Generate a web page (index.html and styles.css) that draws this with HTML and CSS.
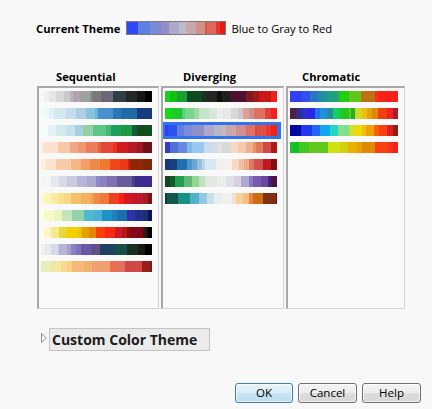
FILE: index.html
```html
<!DOCTYPE html>
<html>
<head>
<meta charset="utf-8">
<title>Color Theme</title>
<link rel="stylesheet" href="styles.css">
</head>
<body>
<div class="dialog">
  <div class="current">
    <span class="label strong">Current Theme</span>
    <span class="theme-bar"></span>
    <span class="label">Blue to Gray to Red</span>
  </div>

  <div class="lists">
    <div class="col col-seq">
      <div class="col-title">Sequential</div>
      <div class="list">
        <div class="item"><div class="sw s1"></div></div>
        <div class="item"><div class="sw s2"></div></div>
        <div class="item"><div class="sw s3"></div></div>
        <div class="item"><div class="sw s4"></div></div>
        <div class="item"><div class="sw s5"></div></div>
        <div class="item"><div class="sw s6"></div></div>
        <div class="item"><div class="sw s7"></div></div>
        <div class="item"><div class="sw s8"></div></div>
        <div class="item"><div class="sw s9"></div></div>
        <div class="item"><div class="sw s10"></div></div>
        <div class="item"><div class="sw s11"></div></div>
      </div>
    </div>
    <div class="col col-div">
      <div class="col-title">Diverging</div>
      <div class="list">
        <div class="item"><div class="sw d1"></div></div>
        <div class="item"><div class="sw d2"></div></div>
        <div class="item sel"><div class="sw d3"></div></div>
        <div class="item"><div class="sw d4"></div></div>
        <div class="item"><div class="sw d5"></div></div>
        <div class="item"><div class="sw d6"></div></div>
        <div class="item"><div class="sw d7"></div></div>
      </div>
    </div>
    <div class="col col-chr">
      <div class="col-title">Chromatic</div>
      <div class="list">
        <div class="item"><div class="sw c1"></div></div>
        <div class="item"><div class="sw c2"></div></div>
        <div class="item"><div class="sw c3"></div></div>
        <div class="item"><div class="sw c4"></div></div>
      </div>
    </div>
  </div>

  <div class="custom">
    <svg class="disclosure" width="6" height="10" viewBox="0 0 6 10"><polygon points="0.5,0.5 5.3,5 0.5,9.5" fill="#ffffff" stroke="#8c8c8c" stroke-width="1"/></svg>
    <div class="custom-box">Custom Color Theme</div>
  </div>

  <div class="buttons">
    <button class="btn btn-default">OK</button>
    <button class="btn">Cancel</button>
    <button class="btn">Help</button>
  </div>
</div>
</body>
</html>
```

FILE: styles.css
```css
html, body {
  margin: 0;
  padding: 0;
}
body {
  width: 432px;
  height: 409px;
  overflow: hidden;
  background: #f8f8f8;
  font-family: "Open Sans", "Noto Sans", sans-serif;
  font-size: 11.2px;
  color: #000;
}
.dialog {
  padding: 21px 11px 0 37px;
}

/* current theme row */
.current {
  display: flex;
  align-items: center;
  height: 14px;
  margin-left: -1px;
}
.label {
  padding-top: 2px;
  line-height: 14px;
  white-space: nowrap;
}
.strong {
  font-weight: 700;
  margin-right: 6px;
}
.theme-bar {
  width: 100px;
  height: 14px;
  box-sizing: border-box;
  border: 1px solid #7a7a7a;
  margin-right: 5px;
  background: linear-gradient(90deg, #3048f8 0 11.3%, #5a80e0 0 23%, #7c88d8 0 34.7%, #9090c8 0 43%, #b0a8c8 0 53%, #bcbcc8 0 59.7%, #c8a8a8 0 70%, #d09088 0 79.7%, #c86050 0 81.3%, #e06858 0 91%, #e03838 0 94.5%, #f01810 0);
}

/* lists */
.lists {
  display: grid;
  grid-template-columns: 122px 123px 119px;
  column-gap: 2px;
  margin-top: 35px;
}
.col-title {
  font-weight: 700;
  line-height: 14px;
  height: 14px;
  margin-bottom: 2px;
  white-space: nowrap;
}
.col-seq .col-title { padding-left: 19px; }
.col-div .col-title { padding-left: 22px; }
.col-chr .col-title { padding-left: 16px; }

.list {
  height: 223px;
  box-sizing: border-box;
  border: 1px solid #d4d4d4;
  border-top: 2px solid #a8a8a8;
  border-left: 2px solid #a8a8a8;
  padding-right: 2px;
  background: #f9f9f9;
}
.item {
  padding: 3px 4px 3px 2px;
}
.item.sel {
  background: #3272f0;
}
.sw {
  height: 11px;
}

/* sequential */
.s1 { background: linear-gradient(90deg, #f6f6f6 0 3%, #f0f0f2 0 7.6%, #e5e5e8 0 13.6%, #d8d8d8 0 21.1%, #cacaca 0 25.7%, #b9b3c3 0 28.7%, #b0a3b0 0 34.7%, #a0a0a0 0 43.8%, #7f9a84 0 46.2%, #7a7a7a 0 54.4%, #6c6678 0 65%, #303f46 0 77%, #252923 0 86.1%, #171717 0 93.7%, #000 0); }
.s2 { background: linear-gradient(90deg, #f4fafc 0 3%, #eef8fb 0 7.6%, #e2f3f8 0 12.1%, #d4e8ef 0 22.7%, #c4dcee 0 31.7%, #aecfe3 0 40.8%, #8ac3e0 0 48.3%, #69b4db 0 51.4%, #4a90cc 0 65%, #2a78bb 0 72.5%, #1f6aa8 0 86.1%, #1a3a80 0); }
.s3 { background: linear-gradient(90deg, #f6fbfc 0 6%, #e2f2f6 0 13.6%, #d4e8ee 0 22.7%, #c6e2ea 0 30.2%, #a8cfe0 0 37.8%, #94d0a4 0 46.8%, #5cc687 0 58.9%, #47b57a 0 63.4%, #1aa05a 0 72.5%, #1a9a40 0 81.6%, #125a40 0 86.1%, #104d20 0); }
.s4 { background: linear-gradient(90deg, #fbeee6 0 3%, #fce0d0 0 15.1%, #f8c8a8 0 25.7%, #f0a888 0 33.2%, #f19870 0 40.8%, #ea7c5c 0 51.4%, #e86040 0 54.4%, #e54838 0 65%, #f03020 0 68.9%, #d01c20 0 78.5%, #b81828 0 86.1%, #a01820 0 92.1%, #701018 0); }
.s5 { background: linear-gradient(90deg, #fdf0e0 0 4.5%, #fbe4cc 0 13.6%, #f8cca8 0 27.2%, #f4b880 0 36.3%, #f3a068 0 43.8%, #f08848 0 52.9%, #f07830 0 61.9%, #f04818 0 71%, #f03818 0 78.5%, #d02010 0 80%, #902808 0 92.1%, #802808 0); }
.s6 { background: linear-gradient(90deg, #f5f5f8 0 8.9%, #e3e9f0 0 16.4%, #d8dae6 0 23.8%, #c9cce0 0 32.7%, #b8b4d8 0 41.7%, #aaa8d0 0 49.1%, #9088c8 0 53.6%, #8a80c0 0 59.5%, #8070b0 0 68.5%, #6a5aa0 0 81.8%, #4b4080 0 84.8%, #3a2c90 0); }
.s7 { background: linear-gradient(90deg, #fdfadc 0 3%, #fcf4b8 0 8.9%, #f8eca0 0 16.4%, #f8e088 0 20.8%, #f8d888 0 26.8%, #f4c068 0 35.7%, #f4b060 0 44.6%, #f0a050 0 47.6%, #f08848 0 53.6%, #f07838 0 61%, #f04028 0 69.9%, #f82010 0 74.4%, #d01820 0 83.3%, #c01828 0 92.3%, #a02020 0 96.7%, #801018 0); }
.s8 { background: linear-gradient(90deg, #fefee0 0 3%, #f8f8c8 0 11.9%, #eef4c0 0 19.3%, #c4e4bc 0 28.3%, #94d4a8 0 38.7%, #50b8d0 0 47.6%, #48b0d0 0 55.1%, #2090c8 0 64%, #2080c0 0 68.5%, #1870b0 0 77.4%, #3030a8 0 84.8%, #203088 0 92.3%, #1a3070 0 96.7%, #101060 0); }
.s9 { background: linear-gradient(90deg, #fefef0 0 3%, #fef8c8 0 8.9%, #f8e890 0 16.4%, #e8d840 0 22.3%, #f0d000 0 34.2%, #e8c010 0 37.2%, #e8a000 0 43.2%, #e08800 0 49.1%, #f84008 0 58%, #f82818 0 67%, #d01828 0 72.9%, #b81818 0 77.4%, #901010 0 80.4%, #800818 0 92.3%, #501010 0 93.8%, #102018 0 96.7%, #000 0); }
.s10 { background: linear-gradient(90deg, #f0f0f4 0 3%, #e8e8f0 0 8.9%, #d8d8e8 0 14.9%, #c8c8d8 0 16.4%, #b4b4d4 0 23.8%, #a8a0c8 0 26.8%, #8a80c8 0 31.3%, #8070b8 0 35.7%, #6858a8 0 44.6%, #605088 0 53.6%, #204060 0 67%, #185048 0 77.4%, #183020 0 87.8%, #181818 0 93.8%, #000 0); }
.s11 { background: linear-gradient(90deg, #e8f0b8 0 8.9%, #f4e8a0 0 17.9%, #f8d890 0 23.8%, #f8d080 0 28.3%, #f4b878 0 38.7%, #f0b070 0 46.1%, #f0a070 0 62.5%, #e87050 0 68.5%, #e07060 0 75.9%, #d04848 0 90.8%, #982018 0 98.2%, #801818 0); }

/* diverging */
.d1 { background: linear-gradient(90deg, #18d020 0 4.5%, #10c010 0 10.5%, #18a030 0 19.6%, #104820 0 33.1%, #1a3020 0 37.7%, #202820 0 46.7%, #101010 0 51.2%, #202020 0 58.7%, #501030 0 72.3%, #801820 0 78.3%, #a01818 0 84.3%, #c81818 0 94.9%, #f02018 0); }
.d2 { background: linear-gradient(90deg, #18d818 0 7.5%, #20c830 0 15.1%, #50d080 0 18.1%, #78d890 0 25.6%, #a0d8a0 0 30.1%, #c4e4c8 0 39.2%, #d8e8d8 0 46.7%, #ececec 0 51.2%, #e8e8e8 0 58.7%, #d8d8d8 0 64.8%, #d0c8c8 0 69.3%, #e0a098 0 75.3%, #d09090 0 79.8%, #e07060 0 88.9%, #e04040 0 94.9%, #f82018 0); }
.d3 { background: linear-gradient(90deg, #3040f0 0 3%, #3050f0 0 10.5%, #6080e0 0 16.6%, #8088d8 0 24.1%, #9090c8 0 34.6%, #b0a8c8 0 43.7%, #b8b8c8 0 51.2%, #c8b8b8 0 54.2%, #c8a8a8 0 63.3%, #d09090 0 72.3%, #e07060 0 80.7%, #c85050 0 81.9%, #e05040 0 90.4%, #e83830 0 94.9%, #f82010 0); }
.d4 { background: linear-gradient(90deg, #3838c0 0 4.5%, #5070d8 0 12%, #6888e0 0 19.6%, #80b8e8 0 24.1%, #98c8f0 0 34.6%, #c8dcf0 0 42.2%, #d0dce8 0 46.7%, #e0e0e0 0 51.2%, #d8d8d8 0 58.7%, #f8d8c0 0 64.8%, #f8c8a8 0 72.3%, #f0b090 0 78.3%, #f09060 0 81.3%, #e07858 0 87.3%, #d04848 0 94.9%, #b01818 0); }
.d5 { background: linear-gradient(90deg, #183878 0 4.5%, #184080 0 10.5%, #2070b0 0 19.6%, #4898d0 0 24.1%, #68a8d8 0 28.6%, #98c0d8 0 33.1%, #b8d8e8 0 36.1%, #d8e8f0 0 45.2%, #f0f0f0 0 51.2%, #f8f0e8 0 60.2%, #f8d8c0 0 66.3%, #f0c0a0 0 70.8%, #f0a888 0 75.3%, #e07860 0 79.8%, #d05050 0 87.3%, #c01820 0 94.9%, #801010 0); }
.d6 { background: linear-gradient(90deg, #104820 0 4.5%, #185830 0 9%, #20a050 0 16.6%, #60b878 0 24.1%, #90d890 0 30.1%, #c0e0c0 0 36.1%, #e0e8e0 0 46.7%, #ececec 0 54.2%, #e0e0e8 0 61.7%, #d8d0e0 0 67.8%, #b0a8d0 0 75.3%, #8878c0 0 78.3%, #7858a8 0 85.8%, #6848a0 0 91.9%, #402080 0 94.9%, #501040 0); }
.d7 { background: linear-gradient(90deg, #104030 0 1.5%, #10584a 0 12%, #189088 0 22.6%, #50b0c0 0 25.6%, #50b0d0 0 30.1%, #90c8e0 0 37.7%, #c8e0e8 0 43.7%, #e8eef0 0 51.2%, #f0f0f0 0 60.2%, #f8e0d0 0 63.3%, #f8d0a0 0 69.3%, #f8c080 0 75.3%, #f08040 0 78.3%, #c87010 0 87.3%, #803010 0 99.4%, #701000 0); }

/* chromatic */
.c1 { background: linear-gradient(90deg, #3040f0 0 11.4%, #3050f0 0 18.9%, #2878c0 0 26.4%, #2090a0 0 33.9%, #20a080 0 44.4%, #20b840 0 45.9%, #20d010 0 55%, #60c818 0 65.5%, #c07010 0 79%, #f03020 0 82%, #f82018 0); }
.c2 { background: linear-gradient(90deg, #502040 0 5.4%, #303090 0 11.4%, #3030c8 0 15.9%, #2828e8 0 23.4%, #2070f0 0 27.9%, #2090d8 0 33.9%, #2090a0 0 39.9%, #10d060 0 45.9%, #20c820 0 55%, #60c818 0 56.5%, #20b030 0 60.4%, #d0d820 0 67%, #e8c010 0 71.5%, #e8a010 0 76%, #e08808 0 81.4%, #f04010 0 89.5%, #f02020 0 95.5%, #b01828 0); }
.c3 { background: linear-gradient(90deg, #0008a0 0 9.9%, #2038f0 0 20.4%, #2068f8 0 27.9%, #10a8f0 0 36.9%, #20d8c0 0 44.4%, #80e090 0 55%, #d0e030 0 60.4%, #f0d800 0 67%, #f0c010 0 70%, #f0a000 0 77.5%, #f86000 0 82%, #f84010 0 89.5%, #e02020 0 95.5%, #902010 0); }
.c4 { background: linear-gradient(90deg, #20c030 0 2.4%, #10c028 0 8.4%, #40c820 0 17.4%, #60c818 0 35.4%, #d0e010 0 45.9%, #d0d010 0 53.5%, #e8b000 0 62.5%, #e8a000 0 67%, #e08808 0 79%, #f84010 0 91%, #f83018 0 95.5%, #f82018 0); }

/* custom color theme */
.custom {
  display: flex;
  align-items: flex-start;
  gap: 2px;
  margin-top: 19px;
  margin-left: 4px;
}
.disclosure {
  margin-top: 5px;
  display: block;
}
.custom-box {
  width: 161px;
  height: 23px;
  box-sizing: border-box;
  border: 1px solid #c4c4c4;
  background: #ebebeb;
  padding: 0 0 0 2px;
  font-size: 14px;
  font-weight: 700;
  line-height: 21px;
  color: #1c1c1c;
  white-space: nowrap;
}

/* buttons */
.buttons {
  display: flex;
  justify-content: flex-end;
  gap: 5px;
  margin-top: 32px;
}
.btn {
  width: 59px;
  height: 20px;
  box-sizing: border-box;
  padding: 0;
  border: 1px solid #707070;
  border-radius: 3px;
  background: linear-gradient(#f4f4f4 0%, #ececec 50%, #dedede 50%, #d6d6d6 100%);
  box-shadow: inset 0 0 0 1px rgba(255, 255, 255, 0.7);
  font-family: inherit;
  font-size: 11.5px;
  line-height: 16px;
  color: #000;
}
.btn-default {
  width: 58px;
  border-color: #3c7fb1;
  background: linear-gradient(#e8f4fb 0%, #dcedf8 50%, #c6e3f4 50%, #bcdcee 100%);
}
```
